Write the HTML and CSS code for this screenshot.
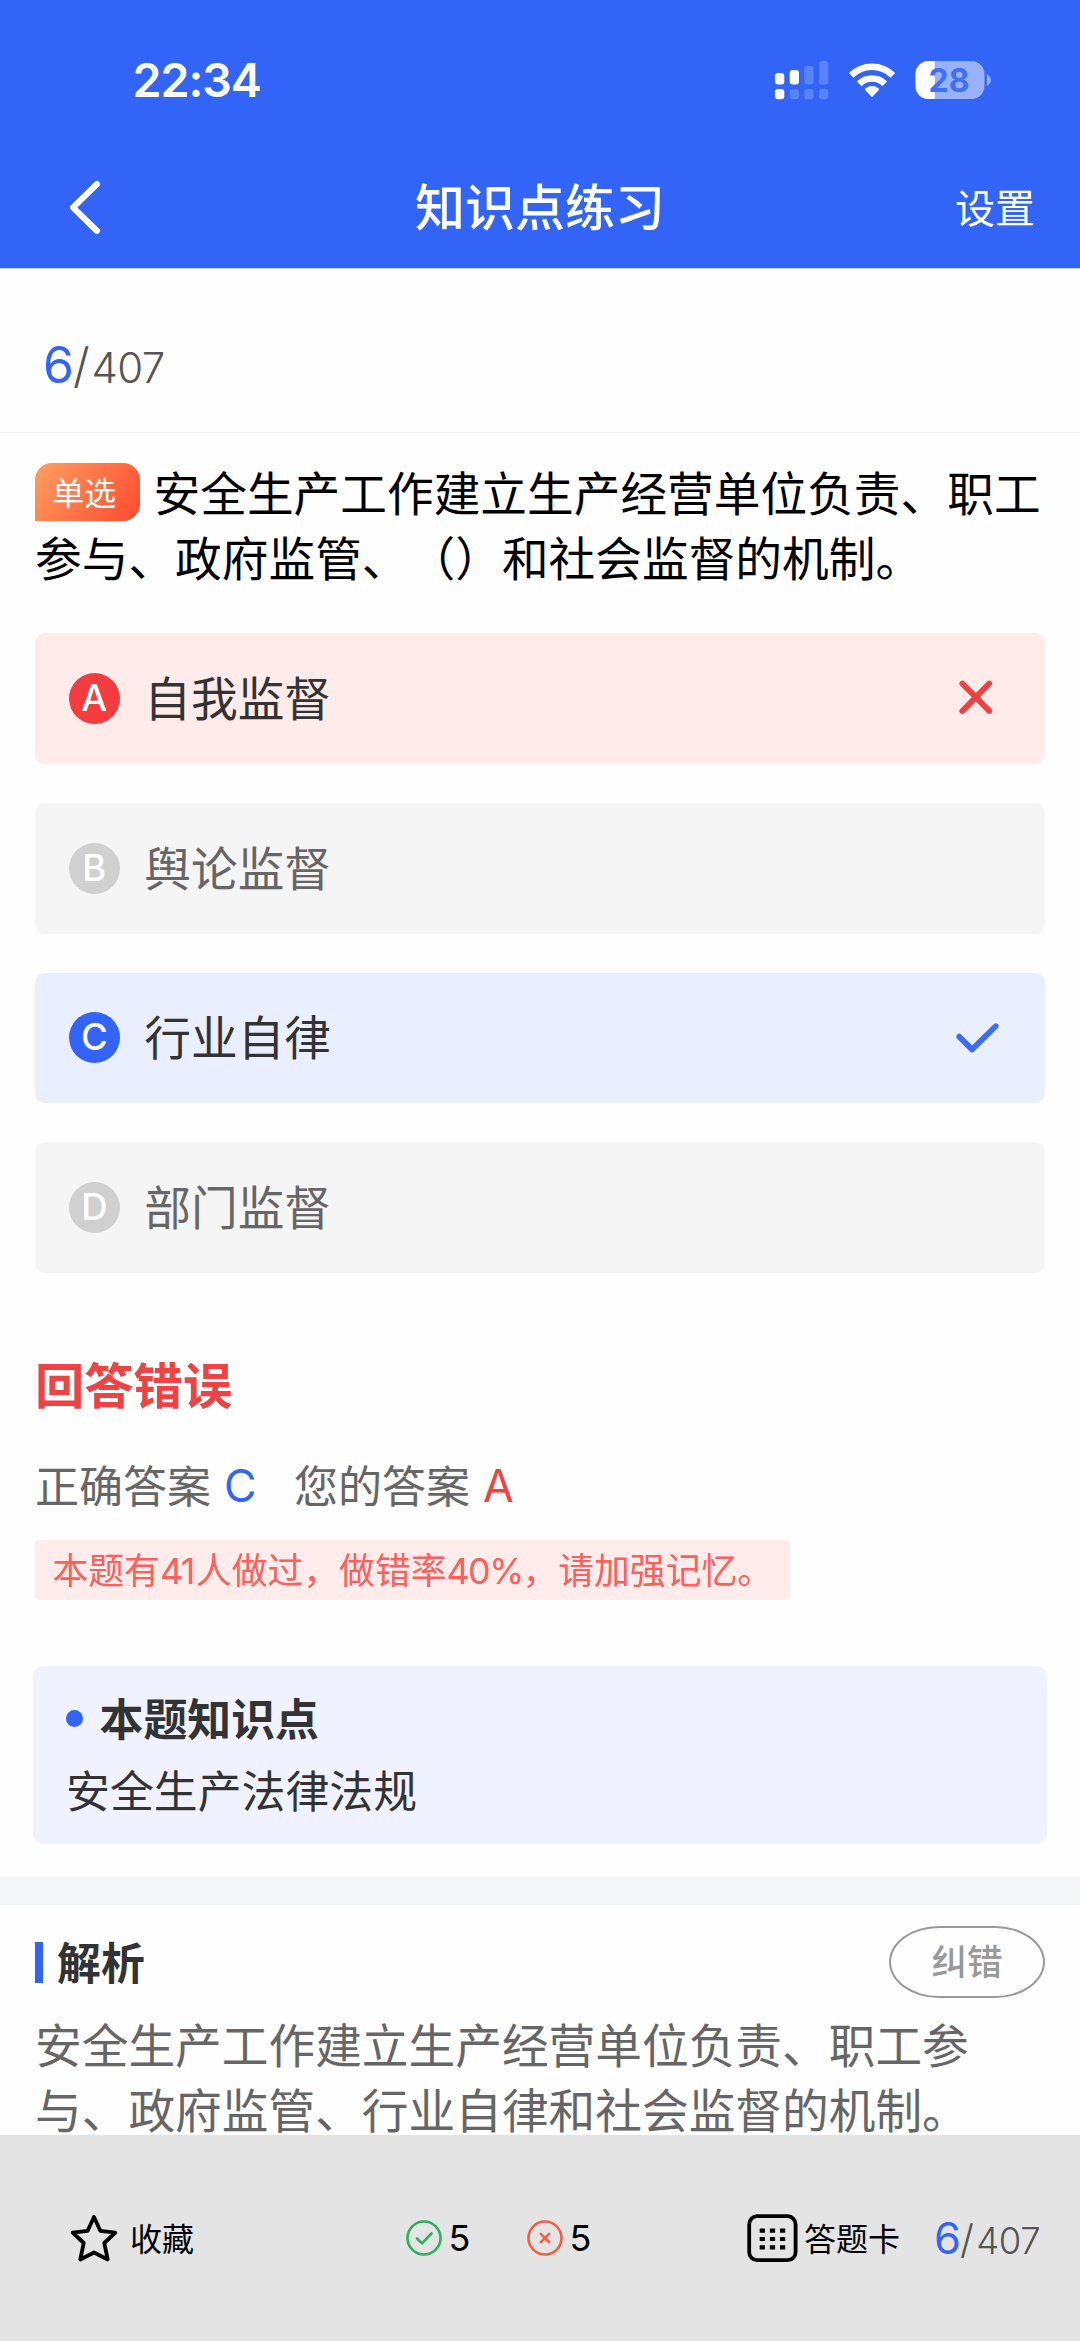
FILE: index.html
```html
<!DOCTYPE html>
<html lang="zh-CN">
<head>
<meta charset="utf-8">
<title>知识点练习</title>
<link rel="stylesheet" href="styles.css">
</head>
<body>
<div class="screen">
  <header class="header">
    <div class="status">
      <span class="time">22:34</span>
      <svg class="status-icons" width="218" height="40" viewBox="0 0 218 40">
        <g fill="#fff">
          <rect x="0" y="13" width="9.300" height="11.500" rx="3"/>
          <rect x="14.700" y="10" width="9.300" height="14.500" rx="3"/>
          <rect x="0" y="29" width="9.300" height="10.300" rx="3"/>
        </g>
        <g fill="#fff" opacity=".2">
          <rect x="29.300" y="6" width="9.300" height="18.500" rx="3"/>
          <rect x="44" y="1" width="9.300" height="23.500" rx="3"/>
          <rect x="14.700" y="29" width="9.300" height="10.300" rx="3"/>
          <rect x="29.300" y="29" width="9.300" height="10.300" rx="3"/>
          <rect x="44" y="29" width="9.300" height="10.300" rx="3"/>
        </g>
        <g fill="none" stroke="#fff" stroke-width="6.600">
          <path d="M76.200 15.300a29.500 29.500 0 0 1 41.600 0"/>
          <path d="M84.200 23.800a18.200 18.200 0 0 1 25.600 0"/>
        </g>
        <path fill="#fff" d="M97 37.200l-6.800-7.200q-.8-1 .4-1.800a11 11 0 0 1 12.800 0q1.200.8.4 1.800z"/>
        <rect x="140.500" y="1" width="69" height="38" rx="13" fill="#97b1fb"/>
        <path fill="#fff" d="M159.800 1h-6.300a13 13 0 0 0-13 13v12a13 13 0 0 0 13 13h6.300z"/>
        <path fill="#97b1fb" d="M211.800 14q4 2 4 6t-4 6z"/>
        <text class="battery-text" x="174" y="31.500" text-anchor="middle">28</text>
      </svg>
    </div>
    <nav class="nav">
      <svg class="back" width="36" height="60" viewBox="0 0 36 60" fill="none" stroke="#fff" stroke-width="6" stroke-linecap="round" stroke-linejoin="round"><path d="M31 6L7 29.500 31 53"/></svg>
      <h1 class="title">知识点练习</h1>
      <span class="settings">设置</span>
    </nav>
  </header>

  <div class="progress"><b>6</b><i>/</i>407</div>

  <main class="main">
    <div class="question"><span class="tag">单选</span>安全生产工作建立生产经营单位负责、职工参与、政府监管、（）和社会监督的机制。</div>

    <div class="options">
      <div class="option wrong"><span class="key">A</span><span class="label">自我监督</span>
        <svg class="mark" width="48" height="48" viewBox="0 0 48 48" fill="none" stroke="#f04142" stroke-width="5.800" stroke-linecap="round"><path d="M7.300 9.500l27 27.500M34.300 9.500L7.300 37"/></svg>
      </div>
      <div class="option"><span class="key">B</span><span class="label">舆论监督</span></div>
      <div class="option right"><span class="key">C</span><span class="label">行业自律</span>
        <svg class="mark" width="48" height="48" viewBox="0 0 48 48" fill="none" stroke="#3b6cf5" stroke-width="5.800" stroke-linecap="round" stroke-linejoin="round"><path d="M4.300 22.700L17 35.500 40.700 12.300"/></svg>
      </div>
      <div class="option"><span class="key">D</span><span class="label">部门监督</span></div>
    </div>

    <h2 class="verdict">回答错误</h2>
    <div class="answers"><span>正确答案</span><span class="ans blue">C</span><span class="yours">您的答案</span><span class="ans red">A</span></div>
    <div class="stats">本题有<span class="n41">41</span>人做过，做错率<span class="n40">40%</span>，请加强记忆。</div>

    <section class="point">
      <h3>本题知识点</h3>
      <p>安全生产法律法规</p>
    </section>
  </main>

  <section class="analysis">
    <div class="analysis-head">
      <h3>解析</h3>
      <span class="report">纠错</span>
    </div>
    <p>安全生产工作建立生产经营单位负责、职工参与、政府监管、行业自律和社会监督的机制。</p>
  </section>

  <footer class="footer">
    <div class="fav">
      <svg width="50" height="50" viewBox="0 0 50 50" fill="none" stroke="#000" stroke-width="3.800" stroke-linejoin="round"><path d="M25 4l6.300 13.800 15 1.800-11 10.400 3.400 16.500L25 39.500 11.300 46.500l3.400-16.500-11-10.400 15-1.800z"/></svg>
      <span>收藏</span>
    </div>
    <div class="count ok">
      <svg width="36" height="36" viewBox="0 0 36 36" fill="none" stroke="#2bb15e" stroke-width="2.600" stroke-linecap="round" stroke-linejoin="round"><circle cx="18" cy="18" r="16.500"/><path d="M11 18.500l5 4.800L25.500 13.500"/></svg>
      <span>5</span>
    </div>
    <div class="count bad">
      <svg width="36" height="36" viewBox="0 0 36 36" fill="none" stroke="#fa5d3c" stroke-width="2.600" stroke-linecap="round"><circle cx="18" cy="18" r="16.500"/><path d="M13.800 13.800l8.400 8.400M22.200 13.800l-8.400 8.400"/></svg>
      <span>5</span>
    </div>
    <div class="card">
      <svg width="52" height="50" viewBox="0 0 52 50"><rect x="3.200" y="3.200" width="46.400" height="44" rx="8" fill="none" stroke="#000" stroke-width="3.800"/><path d="M13.700 17.700h5.200M23.900 17.700h5.200M34 17.700h5.200M13.700 26h5.200M23.900 26h5.200M34 26h5.200M13.700 34.300h5.200M23.900 34.300h5.200M34 34.300h5.200" stroke="#000" stroke-width="4.200"/></svg>
      <span>答题卡</span>
    </div>
    <div class="progress small"><b>6</b><i>/</i>407</div>
  </footer>
</div>
</body>
</html>
```

FILE: styles.css
```css
* { box-sizing: border-box; margin: 0; padding: 0; }
body { background: #fff; font-family: Inter, "Noto Sans CJK SC", sans-serif; color: #333; text-spacing-trim: space-all; }
.screen { width: 1080px; height: 2341px; overflow: hidden; display: flex; flex-direction: column; background: #fefefe; }
h1, h2, h3 { font-weight: 500; }
.header, .main, .analysis, .footer { flex: none; font-family: "Noto Sans CJK SC", sans-serif; }

.header { height: 269px; background: #3164f7; border-bottom: 1px solid #c3d2fd; color: #fff; }
.status { height: 148px; padding: 60px 87px 0 132.500px; display: flex; justify-content: space-between; }
.time { font: 600 46.500px/41px Inter, sans-serif; letter-spacing: -1px; }
.battery-text { font: 700 32px Inter, sans-serif; fill: #3f6ff3; }
.nav { height: 120px; display: grid; grid-template-columns: 200px 1fr 200px; align-items: center; padding: 0 45px 0 66px; }
.title { font-size: 50px; line-height: 60px; text-align: center; padding: 0 21px 9px 0; }
.settings { font-size: 40px; line-height: 60px; text-align: right; padding: 0 0 4px 0; }

.progress { flex: none; height: 164px; padding: 61px 0 0 43px; display: flex; align-items: baseline; border-bottom: 1px solid #f4f4f4; font: 300 42px/70px Inter, sans-serif; letter-spacing: -.700px; color: #555; }
.progress b { font-size: 50px; font-weight: 400; color: #3164f7; letter-spacing: 0; margin-right: -1px; }
.progress i { font-style: normal; font-size: 48px; margin: 0 2.500px 0 0; }

.main { height: 1444px; padding: 28px 35px 0; }
.question { color: #000; font-size: 46.700px; line-height: 65.400px; height: 175px; margin-top: -3px; }
.tag { display: inline-block; vertical-align: top; width: 104.500px; height: 58px; margin: 5px 14px 0 0; border-radius: 17px 17px 17px 0; background: linear-gradient(125deg, #ff9f60, #ff4a2e); color: #fff; font-size: 32px; line-height: 56px; text-align: center; text-indent: -6px; }
.options { display: flex; flex-direction: column; gap: 39px; }
.option { height: 130.750px; padding: 0 42px 0 33.800px; border-radius: 10px; background: #f5f5f5; display: flex; align-items: center; color: #666; font-size: 46.700px; }
.key { width: 51px; height: 51px; border-radius: 50%; background: #d0d0d0; color: #fff; font: 500 36.500px/51px Inter, sans-serif; text-align: center; margin-right: 24.500px; }
.label { flex: 1; line-height: 66px; padding-bottom: 5px; }
.wrong { background: #feebea; color: #333; }
.wrong .key { background: #f43c40; }
.right { background: #eaefff; color: #333; }
.right .key { background: #3164f7; }

.verdict { margin-top: 80px; font-size: 49.300px; line-height: 59px; height: 60px; font-weight: 700; color: #ee4243; }
.answers { margin-top: 41px; height: 60px; display: flex; align-items: center; font-size: 44px; line-height: 60px; color: #666; }
.ans { font: 400 44.500px/60px Inter, sans-serif; padding-top: 3px; }
.blue { color: #3164f7; width: 70px; margin-left: 13px; }
.red { color: #ee4243; margin-left: 13px; }
.stats { margin-top: 26px; width: 755px; height: 60px; padding-left: 17.500px; border-radius: 4px; background: #ffeceb; color: #fb605b; font-size: 35.800px; line-height: 57px; white-space: nowrap; }
.n41, .n40 { display: inline-block; font-family: Inter, sans-serif; font-weight: 400; width: 36px; letter-spacing: -1.500px; }
.n40 { width: 76px; }

.point { margin: 66px -2px 0; height: 178px; padding: 21px 33px 0; border-radius: 10px; background: #f0f2ff; }
.point h3 { display: flex; align-items: center; gap: 16.500px; font-size: 43.900px; line-height: 60px; font-weight: 700; }
.point h3::before { content: ""; width: 17px; height: 17px; border-radius: 50%; background: #3164f7; margin-top: 2px; }
.point p { margin-top: 12px; font-size: 43.900px; line-height: 60px; }

.analysis { height: 258px; border-top: 28px solid #f4f7f8; padding: 21px 35px 0; overflow: hidden; }
.analysis-head { display: flex; justify-content: space-between; align-items: center; height: 72px; }
.analysis h3 { display: flex; align-items: center; gap: 14px; font-size: 43.900px; line-height: 56px; padding-bottom: 2px; font-weight: 700; }
.analysis h3::before { content: ""; width: 8px; height: 41px; background: #3164f7; margin-top: 2px; }
.report { width: 156px; height: 72px; border: 2px solid #999; border-radius: 50px / 36px; color: #999; font-size: 35.500px; font-weight: 500; line-height: 64px; text-align: center; }
.analysis p { margin-top: 12px; font-size: 46.700px; line-height: 65.400px; color: #666; }

.footer { height: 206px; background: #e4e4e4; color: #000; display: flex; align-items: center; font-size: 32px; line-height: 50px; padding-left: 69px; }
.footer > div { display: flex; align-items: center; }
.fav { width: 336.500px; gap: 11px; }
.fav span, .card span { padding-bottom: 3px; }
.count { width: 121px; gap: 7px; }
.count span { font: 400 36px/50px Inter, sans-serif; }
.bad { width: 219.500px; }
.card { width: 188px; gap: 6px; }
.footer > .small { height: auto; padding: 2px 0 0; border: 0; align-items: baseline; font-size: 36.500px; line-height: 50px; letter-spacing: -.300px; }
.small b { font-size: 43.500px; }
.small i { font-size: 40px; }
```
